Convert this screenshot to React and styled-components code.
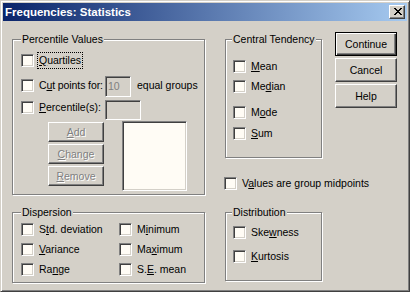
import styled, { createGlobalStyle, css } from 'styled-components'

const Global = createGlobalStyle`
  html, body { margin: 0; padding: 0; background: #d4d0c8; }
  body {
    font-family: "Liberation Sans", Arial, sans-serif;
    font-size: 10.5px;
    line-height: 13px;
    color: #000;
  }
`

const face = '#d4d0c8'
const paper = '#fffcf5'

const Window = styled.div`
  width: 410px;
  height: 292px;
  box-sizing: border-box;
  background: ${face};
  border: 1px solid;
  border-color: ${face} #404040 #404040 ${face};
  box-shadow: inset 1px 1px #fff, inset -1px -1px #808080;
  padding: 2px;
  display: flex;
  flex-direction: column;
`

const TitleBar = styled.div`
  height: 18px;
  flex-shrink: 0;
  display: flex;
  align-items: center;
  justify-content: space-between;
  padding: 0 2px;
  background: linear-gradient(to right, #0a246a, #a6caf0);
  color: #fff;
  font-weight: bold;
  font-size: 11.5px;
`

const CloseBox = styled.div`
  width: 16px;
  height: 14px;
  box-sizing: border-box;
  background: ${face};
  border: 1px solid;
  border-color: #fff #404040 #404040 #fff;
  box-shadow: inset -1px -1px #808080;
  padding: 2px 0 0 4px;
  display: flex;
  align-items: flex-start;
`

const Body = styled.div`
  display: flex;
  align-items: flex-start;
  padding: 11px 0 0 9px;
`

const Column = styled.div`
  display: flex;
  flex-direction: column;
  width: ${p => p.$w}px;
  margin-left: ${p => p.$ml || 0}px;
  padding-top: ${p => p.$pt || 0}px;
  gap: ${p => p.$gap || 0}px;
`

const Group = styled.div`
  position: relative;
  box-sizing: border-box;
  height: ${p => p.$h}px;
  margin-top: ${p => p.$mt || 0}px;
  border: 1px solid #808080;
  box-shadow: inset 1px 1px #fff, 1px 1px #fff;
  padding: ${p => p.$pad};
  display: flex;
  flex-direction: column;
`

const Legend = styled.span`
  position: absolute;
  top: -7px;
  left: ${p => p.$x}px;
  padding: 0 1px;
  background: ${face};
  white-space: nowrap;
`

const Row = styled.div`
  display: flex;
  align-items: flex-start;
  margin-top: ${p => p.$mt || 0}px;
`

const Option = styled.label`
  display: flex;
  align-items: center;
  gap: 5px;
  height: 13px;
  white-space: nowrap;
  width: ${p => (p.$w ? `${p.$w}px` : 'auto')};
  margin-top: ${p => p.$mt || 0}px;
  margin-left: ${p => p.$ml || 0}px;
`

const Check = styled.span`
  width: 13px;
  height: 13px;
  flex-shrink: 0;
  box-sizing: border-box;
  background: ${paper};
  border: 1px solid;
  border-color: #808080 #fff #fff #808080;
  box-shadow: inset 1px 1px #404040, inset -1px -1px ${face};
`

const Focus = styled.span`
  outline: 1px dotted #000;
  outline-offset: 1px;
`

const Tight = styled.span`
  letter-spacing: -0.1px;
`

const Field = styled.div`
  box-sizing: border-box;
  width: ${p => p.$w}px;
  height: ${p => p.$h}px;
  flex-shrink: 0;
  background: ${p => (p.$white ? paper : face)};
  border: 1px solid;
  border-color: #808080 #fff #fff #808080;
  box-shadow: inset 1px 1px #404040, inset -1px -1px ${face};
  color: #808080;
  padding: 3px 0 0 2px;
  margin-top: ${p => p.$mt || 0}px;
  margin-left: ${p => p.$ml || 0}px;
`

const Text = styled.span`
  white-space: nowrap;
  margin-left: ${p => p.$ml || 0}px;
  margin-top: ${p => p.$mt || 0}px;
`

const ButtonStack = styled.div`
  display: flex;
  flex-direction: column;
  gap: 2px;
  margin-left: ${p => p.$ml || 0}px;
  margin-top: ${p => p.$mt || 0}px;
`

const Button = styled.button`
  box-sizing: border-box;
  width: ${p => p.$w}px;
  height: ${p => p.$h}px;
  padding: 0;
  font: inherit;
  background: ${face};
  border: 1px solid;
  border-color: #fff #404040 #404040 #fff;
  box-shadow: inset -1px -1px #808080;
  color: #000;
  display: flex;
  align-items: center;
  justify-content: center;
  ${p => p.$disabled && css`
    color: #808080;
    text-shadow: 1px 1px 0 #fff;
  `}
  ${p => p.$default && css`
    border-color: #000;
    box-shadow: inset 1px 1px #fff, inset -1px -1px #404040, inset -2px -2px #808080;
  `}
`

const DispersionGrid = styled.div`
  display: grid;
  grid-template-columns: 98px auto;
  row-gap: 7px;
`

const U = styled.span`
  text-decoration: underline;
`

const CloseGlyph = () => (
  <svg width="8" height="7" viewBox="0 0 8 7" shapeRendering="crispEdges">
    <path
      fill="#000"
      d="M0 0h2v1H0zM6 0h2v1H6zM1 1h2v1H1zM5 1h2v1H5zM2 2h4v1H2zM3 3h2v1H3zM2 4h4v1H2zM1 5h2v1H1zM5 5h2v1H5zM0 6h2v1H0zM6 6h2v1H6z"
    />
  </svg>
)

const Opt = ({ children, ...rest }) => (
  <Option {...rest}>
    <Check />
    {children}
  </Option>
)

export default function App() {
  return (
    <>
      <Global />
      <Window>
        <TitleBar>
          <span>Frequencies: Statistics</span>
          <CloseBox>
            <CloseGlyph />
          </CloseBox>
        </TitleBar>

        <Body>
          <Column $w={193} $pt={7} $gap={17}>
            <Group $h={156} $pad="14px 0 0 8px">
              <Legend $x={8}>Percentile Values</Legend>
              <Opt>
                <Focus><U>Q</U>uartiles</Focus>
              </Opt>
              <Row $mt={9}>
                <Opt $w={84} $mt={3}>
                  <Tight>C<U>u</U>t points for:</Tight>
                </Opt>
                <Field $w={26} $h={21}>10</Field>
                <Text $ml={6} $mt={3}>equal groups</Text>
              </Row>
              <Row $mt={3}>
                <Opt $w={84} $mt={1}>
                  <span><U>P</U>ercentile(s):</span>
                </Opt>
                <Field $w={36} $h={20} />
              </Row>
              <Row>
                <ButtonStack $ml={27} $mt={2}>
                  <Button $w={56} $h={20} $disabled><span><U>A</U>dd</span></Button>
                  <Button $w={56} $h={20} $disabled><span><U>C</U>hange</span></Button>
                  <Button $w={56} $h={20} $disabled><span><U>R</U>emove</span></Button>
                </ButtonStack>
                <Field $w={65} $h={70} $white $ml={18} $mt={1} />
              </Row>
            </Group>

            <Group $h={71} $pad="10px 0 0 8px">
              <Legend $x={8}>Dispersion</Legend>
              <DispersionGrid>
                <Opt><span>S<U>t</U>d. deviation</span></Opt>
                <Opt><span>M<U>i</U>nimum</span></Opt>
                <Opt><span><U>V</U>ariance</span></Opt>
                <Opt><span>Ma<U>x</U>imum</span></Opt>
                <Opt><span>Ra<U>n</U>ge</span></Opt>
                <Opt><span>S.<U>E</U>. mean</span></Opt>
              </DispersionGrid>
            </Group>
          </Column>

          <Column $w={97} $ml={20} $pt={7}>
            <Group $h={119} $pad="20px 0 0 7px">
              <Legend $x={6}>Central Tendency</Legend>
              <Opt><span><U>M</U>ean</span></Opt>
              <Opt $mt={7}><span>Me<U>d</U>ian</span></Opt>
              <Opt $mt={13}><span>M<U>o</U>de</span></Opt>
              <Opt $mt={8}><span><U>S</U>um</span></Opt>
            </Group>

            <Opt $mt={19} $ml={-1}>
              <span>V<U>a</U>lues are group midpoints</span>
            </Opt>

            <Group $h={69} $mt={22} $pad="13px 0 0 7px">
              <Legend $x={6}>Distribution</Legend>
              <Opt><span>Ske<U>w</U>ness</span></Opt>
              <Opt $mt={11}><span><U>K</U>urtosis</span></Opt>
            </Group>
          </Column>

          <ButtonStack $ml={13}>
            <Button $w={62} $h={24} $default>Continue</Button>
            <Button $w={62} $h={24}>Cancel</Button>
            <Button $w={62} $h={24}>Help</Button>
          </ButtonStack>
        </Body>
      </Window>
    </>
  )
}
